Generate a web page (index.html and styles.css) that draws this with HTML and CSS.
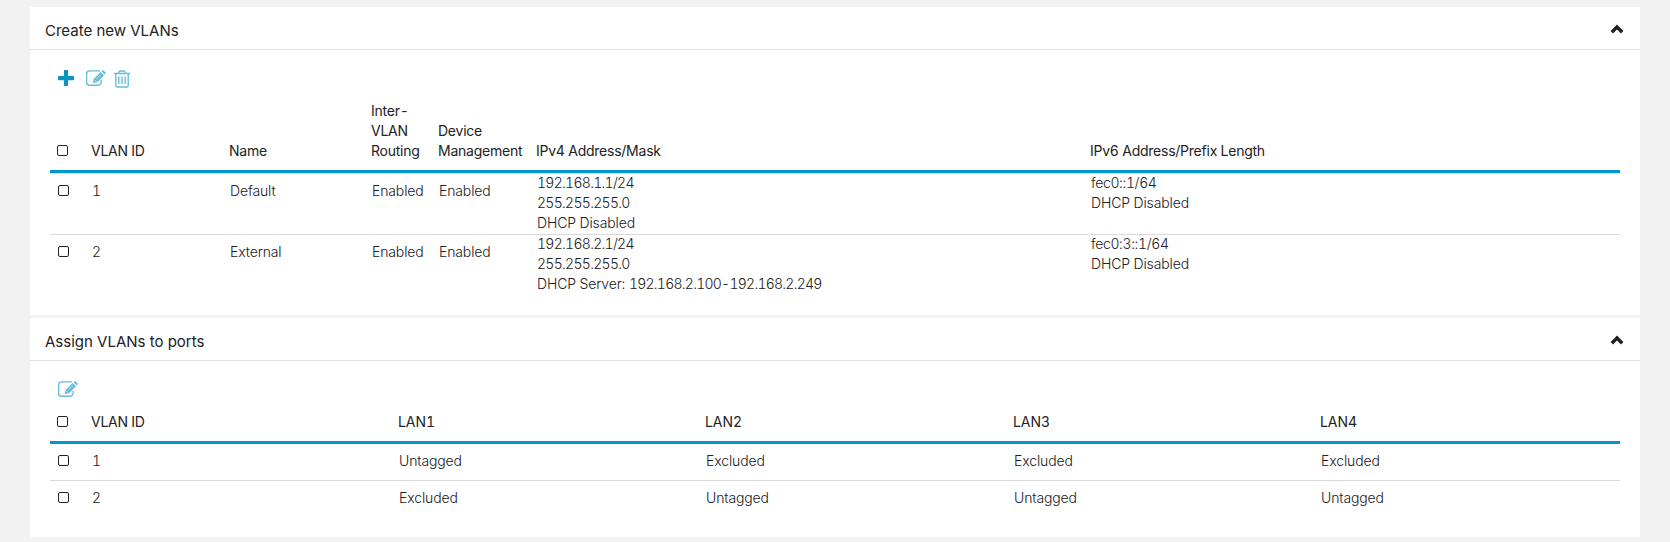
FILE: index.html
```html
<!DOCTYPE html>
<html lang="en">
<head>
<meta charset="utf-8">
<title>VLAN Settings</title>
<link rel="stylesheet" href="styles.css">
</head>
<body>
<svg width="0" height="0" class="defs">
  <symbol id="edit" viewBox="0 0 20 16">
    <path d="M14 .9H3.6A3 3 0 0 0 .6 3.900V12.200A3 3 0 0 0 3.600 15.200H12.100A3 3 0 0 0 15.100 12.200V9.800" fill="none" stroke="currentColor" stroke-width="1.350"/>
    <path d="M6.800 13.100l.8-4.200L14.600 1.900l3.400 3.400-7 7z M15.500 1.300l.8-.8q.7-.6 1.400 0l1.700 1.700q.6.700 0 1.400l-.8.800z" fill="currentColor"/>
    <path d="M8.300 9.700l1.900 1.900M10.300 8.900l4.600-4.600" stroke="#fff" stroke-width=".6"/>
  </symbol>
  <symbol id="chevron" viewBox="0 0 14 10">
    <path d="M1.800 8.200L7 3L12.200 8.200" fill="none" stroke="#222" stroke-width="3.500"/>
  </symbol>
</svg>
<main class="page">
  <section class="panel panel-create">
    <header class="panel-header"><h2>Create new VLANs</h2><svg class="chevron"><use href="#chevron"/></svg></header>
    <div class="toolbar">
      <svg class="plus" viewBox="0 0 16 16"><path d="M5.900 1q0-1 1-1h2.200q1 0 1 1v5h5q.9 0 .9 1v2.200q0 1-.9 1h-5V15q0 1-1 1H6.900q-1 0-1-1v-4.800H1q-1 0-1-1V7q0-1 1-1h4.900z" fill="currentColor"/></svg>
      <svg class="edit"><use href="#edit"/></svg>
      <svg class="trash" viewBox="0 0 16 18"><path d="M0 3.500H16M4.900 3.500V2.200Q4.900 1 6.100 1H9.900Q11.100 1 11.100 2.200V3.500M1.800 3.500V15.700Q1.800 17 3.100 17H12.900Q14.200 17 14.200 15.700V3.500M4.800 6.500V14M8 6.500V14M11.200 6.500V14" fill="none" stroke="currentColor" stroke-width="1.350"/></svg>
    </div>
    <div class="table vlans">
      <div class="row head">
        <i class="check"></i><span>VLAN ID</span><span>Name</span><span>Inter-<br>VLAN<br>Routing</span><span>Device<br>Management</span><span>IPv4 Address/Mask</span><span>IPv6 Address/Prefix Length</span>
      </div>
      <div class="row">
        <i class="check"></i><span class="id">1</span><span>Default</span><span>Enabled</span><span>Enabled</span><span class="multi"><span class="ip">192.168.1.1/24</span><br><span class="ip">255.255.255.0</span><br>DHCP Disabled</span><span class="multi"><span class="ip6">fec0::1/64</span><br>DHCP Disabled</span>
      </div>
      <div class="row">
        <i class="check"></i><span class="id">2</span><span>External</span><span>Enabled</span><span>Enabled</span><span class="multi"><span class="ip">192.168.2.1/24</span><br><span class="ip">255.255.255.0</span><br>DHCP Server: <span class="ip range">192.168.2.100-192.168.2.249</span></span><span class="multi"><span class="ip6">fec0:3::1/64</span><br>DHCP Disabled</span>
      </div>
    </div>
  </section>
  <section class="panel panel-assign">
    <header class="panel-header"><h2>Assign VLANs to ports</h2><svg class="chevron"><use href="#chevron"/></svg></header>
    <div class="toolbar">
      <svg class="edit"><use href="#edit"/></svg>
    </div>
    <div class="table ports">
      <div class="row head"><i class="check"></i><span>VLAN ID</span><span class="lan">LAN1</span><span class="lan">LAN2</span><span class="lan">LAN3</span><span class="lan">LAN4</span></div>
      <div class="row"><i class="check"></i><span class="id">1</span><span>Untagged</span><span>Excluded</span><span>Excluded</span><span>Excluded</span></div>
      <div class="row"><i class="check"></i><span class="id">2</span><span>Excluded</span><span>Untagged</span><span>Untagged</span><span>Untagged</span></div>
    </div>
  </section>
</main>
</body>
</html>
```
FILE: styles.css
```css
* { box-sizing: border-box; }
body { margin: 0; background: #f2f2f2; color: #202022; font: 300 14px/20px Inter, "Liberation Sans", sans-serif; }
.defs { position: absolute; }
.page { display: flex; flex-direction: column; gap: 3px; padding: 7px 30px 5px; }
.panel { background: #fff; padding-bottom: 1px; }
.panel-create { height: 308px; }
.panel-assign { height: 219px; }
.panel-header { display: flex; justify-content: space-between; align-items: center; height: 43px; padding: 0 15px; border-bottom: 1px solid #e5e5e5; }
.panel-header h2 { margin: 5px 0 0; font-size: 15px; font-weight: 400; color: #222; white-space: nowrap; }
.chevron { width: 14px; height: 10px; margin: 2px 1px 0 0; }
.toolbar { display: flex; align-items: flex-start; padding: 20px 28px 0; height: 50px; color: #64bbdb; }
.plus { width: 16px; height: 16px; margin-right: 12px; color: #0d91c1; }
.edit { width: 20px; height: 16px; margin-right: 8px; }
.trash { width: 16px; height: 18px; }
.table { margin: 0 20px; }
.row { display: grid; align-items: start; border-bottom: 1px solid #d9d9d9; white-space: nowrap; letter-spacing: -.13px; font-variant-numeric: tabular-nums; }
.row:last-child { border-bottom: 0; }
.vlans .row { grid-template-columns: 43px 137px 142px 67px 98px 554px 1fr; height: 61px; padding-top: 7px; }
.vlans .row .multi { margin-top: -8px; }
.ports .row { grid-template-columns: 43px 306px 307px 308px 307px 1fr; height: 37px; padding-top: 7px; }
.row.head { font-weight: 400; color: #222; border-bottom: 3px solid #0096d6; align-items: end; letter-spacing: -.24px; }
.vlans .row.head { grid-template-columns: 41px 138px 142px 67px 98px 554px 1fr; height: 73px; padding: 0 0 9px; box-shadow: 0 1px #c5e8f6; margin-bottom: 1px; }
.ports .row.head { grid-template-columns: 41px 307px 307px 308px 307px 1fr; height: 32px; padding: 0 0 9px; }
.row.head .lan { letter-spacing: -.05px; }
.panel-assign .toolbar { height: 51px; }
.check { width: 11px; height: 11px; margin: 4px 0 0 8px; border: 1px solid #222; border-radius: 2px; }
.head .check { margin: 0 0 5px 7px; }
.id { margin-left: -1px; }
.ip { letter-spacing: -.71px; }
.ip.range { letter-spacing: -.74px; }
.ip6 { letter-spacing: -.35px; }
```
